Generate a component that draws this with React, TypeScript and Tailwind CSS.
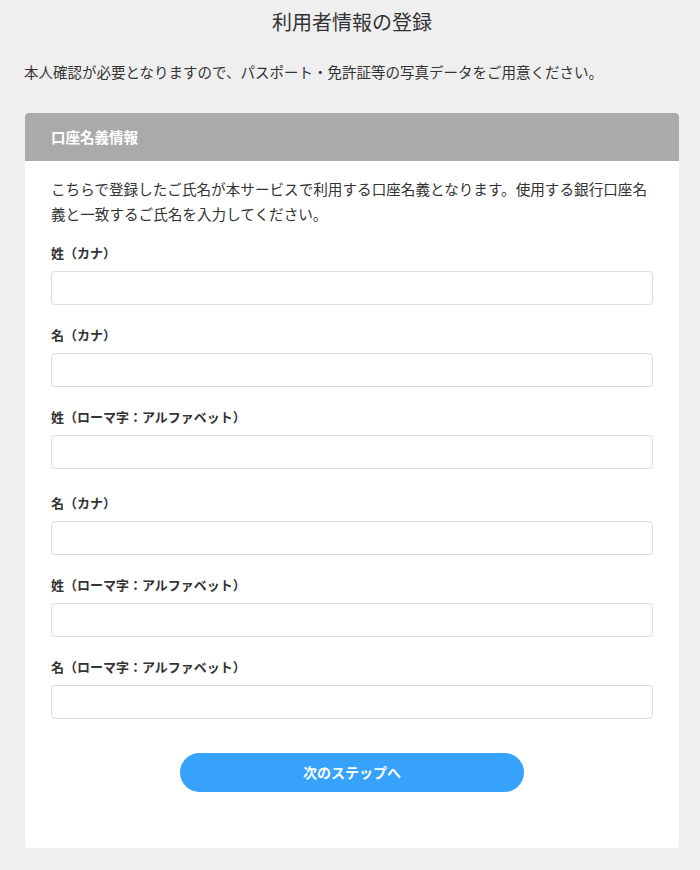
const fields = [
  '姓（カナ）',
  '名（カナ）',
  '姓（ローマ字：アルファベット）',
  '名（カナ）',
  '姓（ローマ字：アルファベット）',
  '名（ローマ字：アルファベット）',
];

export default function App() {
  return (
    <div
      className="min-h-[870px] w-full bg-[#efefef] text-[#333] pl-[25px] pr-[21px] pb-[22px]"
      style={{ fontFamily: '"Noto Sans CJK JP", "Noto Sans", sans-serif' }}
    >
      {/* Title */}
      <h1 className="pt-[6px] text-center text-[20px] leading-[32px] font-normal">利用者情報の登録</h1>

      <p className="mt-[22px] -ml-px text-[14.5px] leading-[24px]">
        本人確認が必要となりますので、パスポート・免許証等の写真データをご用意ください。
      </p>

      {/* Card */}
      <div className="mt-[29px] rounded-[4px] bg-white overflow-hidden">
        <div className="h-[48px] bg-[#aaaaaa] flex items-center px-[26px]">
          <span className="text-white font-bold text-[14.5px]">口座名義情報</span>
        </div>

        <div className="px-[26px] pt-[15px] pb-[56px]">
          <p className="text-[14.6px] leading-[25px]">
            こちらで登録したご氏名が本サービスで利用する口座名義となります。使用する銀行口座名義と一致するご氏名を入力してください。
          </p>

          <div className="mt-[18px] flex flex-col">
            {fields.map((label, i) => (
              <div key={i} className={i === 3 ? 'mt-[25px]' : i === 0 ? '' : 'mt-[21px]'}>
                <label className="block text-[13px] leading-[18px] font-bold">{label}</label>
                <input
                  type="text"
                  className="mt-[9px] block w-full h-[34px] rounded-[4px] border border-[#dcdcdc] bg-white px-3 outline-none"
                />
              </div>
            ))}
          </div>

          <div className="mt-[34px] flex justify-center">
            <button className="w-[344px] h-[39px] rounded-full bg-[#37a2fb] text-white font-bold text-[14px]">
              次のステップへ
            </button>
          </div>
        </div>
      </div>
    </div>
  );
}
